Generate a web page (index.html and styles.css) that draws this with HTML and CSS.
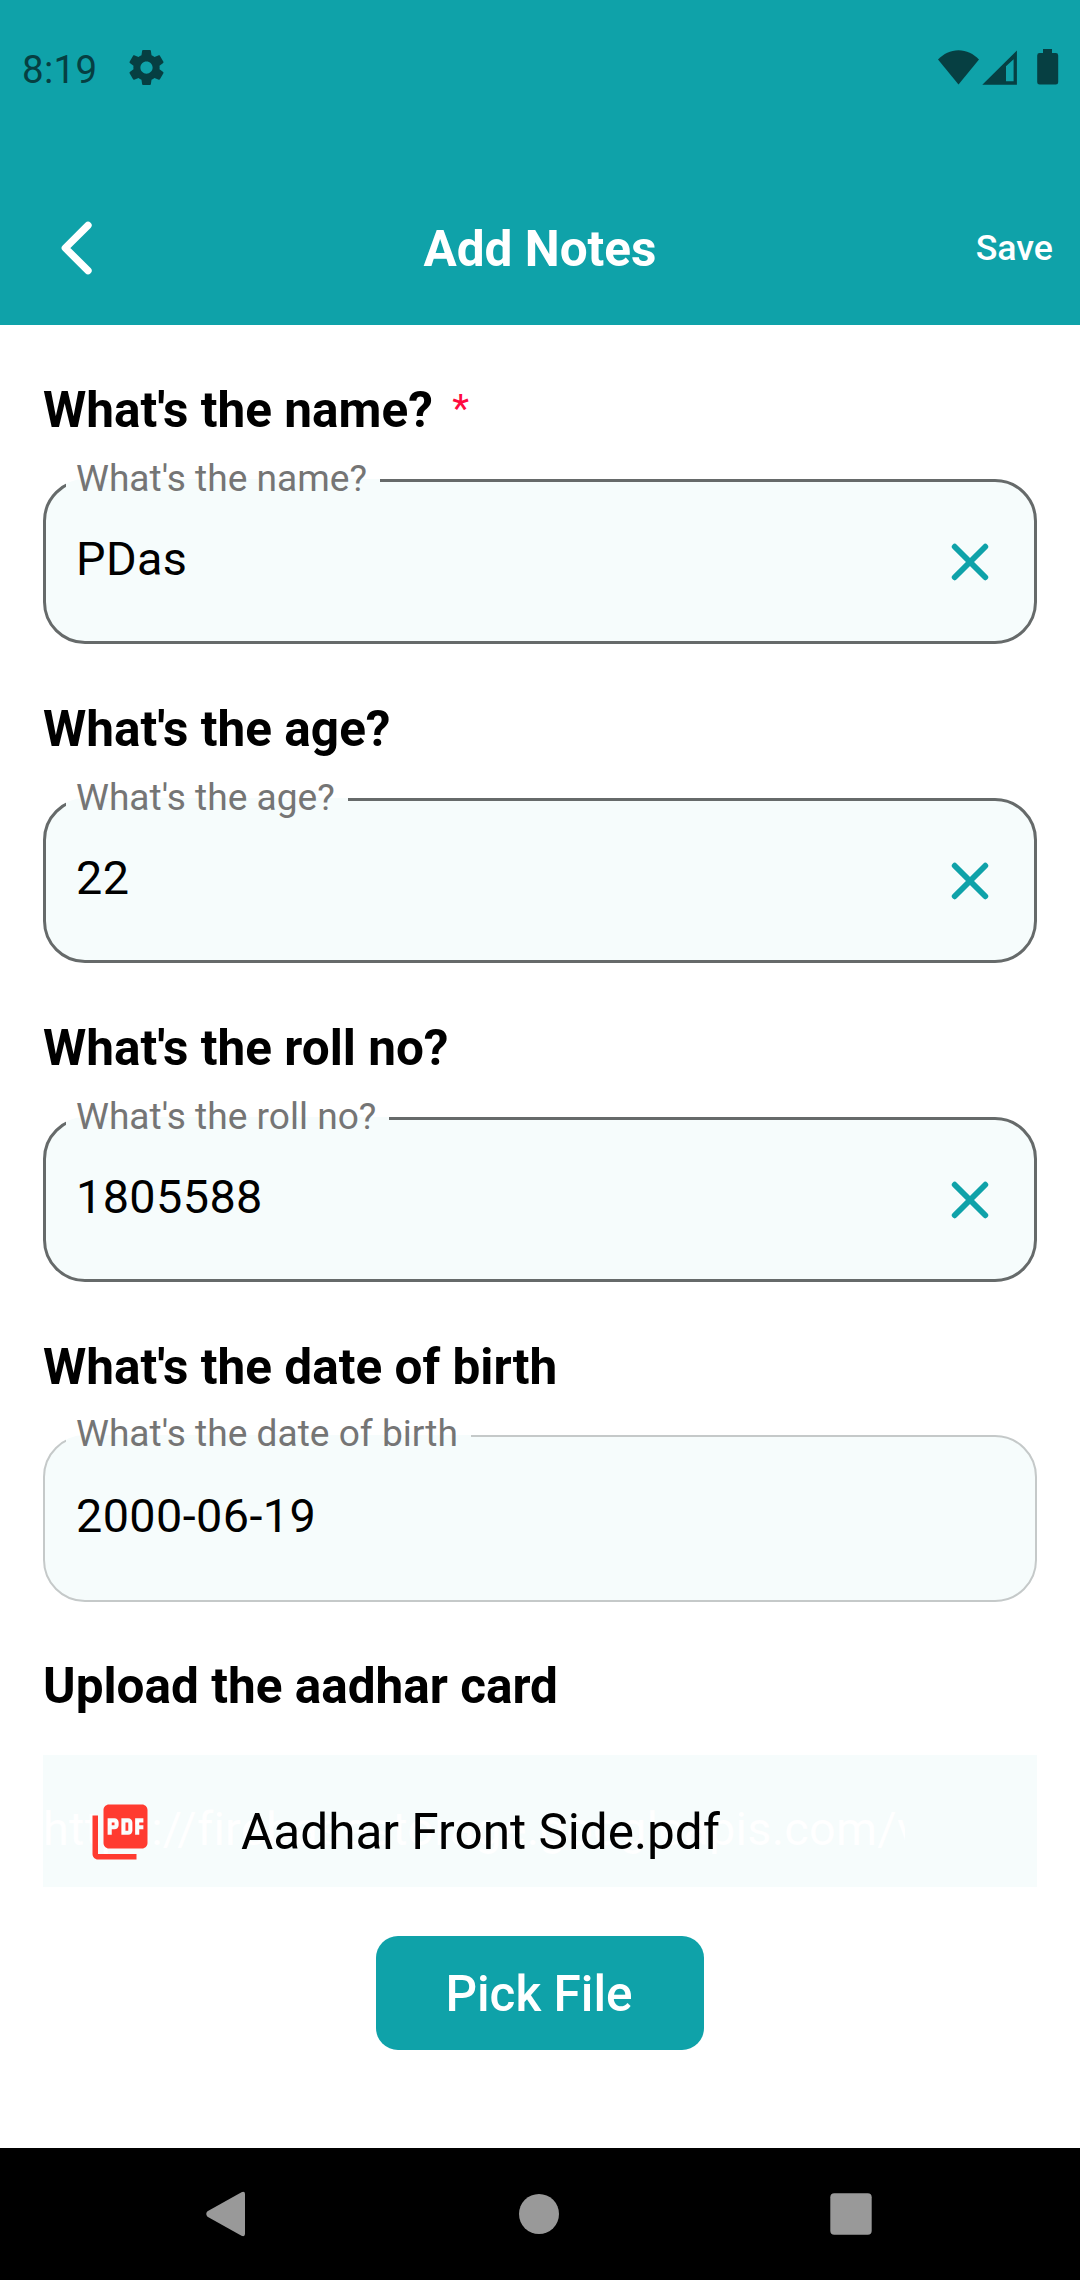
FILE: index.html
```html
<!DOCTYPE html>
<html lang="en">
<head>
<meta charset="utf-8">
<title>Add Notes</title>
<link rel="stylesheet" href="styles.css">
</head>
<body>
<div class="screen">
  <header class="top">
    <div class="status">
      <span class="time">8:19</span>
      <svg class="gear" viewBox="2 2 20 20" width="35" height="35"><path d="M19.43 12.98c.04-.32.07-.64.07-.98s-.03-.66-.07-.98l2.11-1.65c.19-.15.24-.42.12-.64l-2-3.46c-.12-.22-.39-.3-.61-.22l-2.49 1c-.52-.4-1.08-.73-1.69-.98l-.38-2.65C14.46 2.18 14.25 2 14 2h-4c-.25 0-.46.18-.49.42l-.38 2.65c-.61.25-1.17.59-1.69.98l-2.49-1c-.23-.09-.49 0-.61.22l-2 3.46c-.13.22-.07.49.12.64l2.11 1.65c-.04.32-.07.65-.07.98s.03.66.07.98l-2.11 1.65c-.19.15-.24.42-.12.64l2 3.46c.12.22.39.3.61.22l2.49-1c.52.4 1.08.73 1.69.98l.38 2.65c.03.24.24.42.49.42h4c.25 0 .46-.18.49-.42l.38-2.65c.61-.25 1.17-.59 1.69-.98l2.49 1c.23.09.49 0 .61-.22l2-3.46c.12-.22.07-.49-.12-.64l-2.11-1.65zM12 15.5c-1.93 0-3.5-1.57-3.5-3.5s1.57-3.5 3.5-3.5 3.5 1.57 3.5 3.5-1.57 3.5-3.5 3.5z"/></svg>
      <svg class="indicators" viewBox="0 0 122 37" width="122" height="37">
        <path d="M0 10.5C5.500 5 12.500 1.300 20.500 1.300S35.500 5 41 10.500L20.500 35.500Z"/>
        <path fill-rule="evenodd" d="M44.300 35.800 78.900 1.500V35.800ZM68 17.300V32.300H75.600V10.200Z"/>
        <path d="M105 0h9v4h3.800q2.400 0 2.400 2.400v26.800q0 2.400-2.400 2.400h-16.200q-2.400 0-2.400-2.400V6.400q0-2.400 2.400-2.400h3.400z"/>
      </svg>
    </div>
    <div class="appbar">
      <svg class="back" viewBox="0 0 32 54" width="32" height="54"><path d="M28 4.300 5.300 27 28 49.700"/></svg>
      <h1 class="title">Add Notes</h1>
      <span class="save">Save</span>
    </div>
  </header>

  <main class="form">
    <section class="question">
      <h2 class="heading">What's the name? <span class="required">*</span></h2>
      <fieldset class="field">
        <legend class="label">What's the name?</legend>
        <div class="field-body"><span class="value">PDas</span><svg class="clear" viewBox="0 0 38 38" width="38" height="38"><path d="M3.700 3.700 34.300 34.300M34.300 3.700 3.700 34.300"/></svg></div>
      </fieldset>
    </section>
    <section class="question">
      <h2 class="heading">What's the age?</h2>
      <fieldset class="field">
        <legend class="label">What's the age?</legend>
        <div class="field-body"><span class="value">22</span><svg class="clear" viewBox="0 0 38 38" width="38" height="38"><path d="M3.700 3.700 34.300 34.300M34.300 3.700 3.700 34.300"/></svg></div>
      </fieldset>
    </section>
    <section class="question">
      <h2 class="heading">What's the roll no?</h2>
      <fieldset class="field">
        <legend class="label">What's the roll no?</legend>
        <div class="field-body"><span class="value">1805588</span><svg class="clear" viewBox="0 0 38 38" width="38" height="38"><path d="M3.700 3.700 34.300 34.300M34.300 3.700 3.700 34.300"/></svg></div>
      </fieldset>
    </section>
    <section class="question">
      <h2 class="heading">What's the date of birth</h2>
      <fieldset class="field field-date">
        <legend class="label">What's the date of birth</legend>
        <div class="field-body"><span class="value">2000-06-19</span></div>
      </fieldset>
    </section>
    <section class="upload">
      <h2 class="heading">Upload the aadhar card</h2>
      <div class="file">
        <span class="file-url">https://firebasestorage.googleapis.com/v</span>
        <svg class="pdf" viewBox="0 0 24 24" width="66" height="66"><path d="M20 2H8c-1.100 0-2 .9-2 2v12c0 1.100.9 2 2 2h12c1.100 0 2-.9 2-2V4c0-1.100-.9-2-2-2zm-8.500 7.500c0 .83-.67 1.500-1.500 1.500H9v2H7.500V7H10c.83 0 1.500.67 1.500 1.500v1zm5 2c0 .83-.67 1.500-1.500 1.500h-2.500V7H15c.83 0 1.500.67 1.500 1.500v3zm4-3H19v1h1.500V11H19v2h-1.500V7h3v1.500zM9 9.500h1v-1H9v1zM4 6H2v14c0 1.100.9 2 2 2h14v-2H4V6zm10 5.500h1v-3h-1v3z"/></svg>
        <span class="file-name">Aadhar Front Side.pdf</span>
      </div>
      <button class="pick" type="button">Pick File</button>
    </section>
  </main>

  <nav class="navbar">
    <svg viewBox="0 0 40 46" width="40" height="46"><path d="M1.500 20.300 35.500 1.200Q39 0 39 3V43Q39 46 35.500 44.800L1.500 25.700Q-1 23 1.500 20.300Z"/></svg>
    <svg viewBox="0 0 40 40" width="40" height="40"><circle cx="20" cy="20" r="20"/></svg>
    <svg viewBox="0 0 42 42" width="42" height="42"><rect x=".3" y=".3" width="41.400" height="41.400" rx="4"/></svg>
  </nav>
</div>
</body>
</html>
```
FILE: styles.css
```css
* { box-sizing: border-box; }
body { margin: 0; background: #fff; color: #000; font-family: Roboto, "Liberation Sans", sans-serif; }
svg { display: block; flex: none; }
h1, h2 { margin: 0; }

.screen { width: 1080px; height: 2280px; display: flex; flex-direction: column; overflow: hidden; }

.top { height: 325px; background: #0fa2a9; display: flex; flex-direction: column; }
.status { height: 138px; padding: 0 20px 3px 22px; display: flex; align-items: center; color: #063f42; fill: #063f42; }
.time { font-size: 38.5px; line-height: 46px; padding-top: 4px; letter-spacing: .3px; }
.gear { margin-left: 32px; }
.indicators { margin-left: auto; }
.appbar { height: 110px; margin-top: 55px; padding: 0 27px 0 60px; display: grid; grid-template-columns: 1fr auto 1fr; align-items: center; color: #fff; }
.back { fill: none; stroke: #fff; stroke-width: 7.3; stroke-linecap: round; stroke-linejoin: round; }
.title { font-size: 49.5px; font-weight: 700; line-height: 58px; margin-left: -33px; padding-top: 2px; }
.save { justify-self: end; font-size: 35.75px; font-weight: 500; line-height: 42px; }

.form { flex: 1; padding: 56px 43px 0; }
.question { height: 319px; display: flex; flex-direction: column; }
.heading { font-size: 49.5px; font-weight: 700; line-height: 58px; }
.required { margin-left: 7px; vertical-align: 5px; font-size: 39px; font-weight: 400; line-height: 1; color: #ff0a3f; }
.field { height: 188px; min-width: 0; margin: 17px 0 0; padding: 0 45px 0 30px; border: 3px solid #666a6a; border-radius: 42px; background: #f6fcfc; }
.label { margin-left: -10px; padding: 1px 13px 3px 10px; font-size: 37.125px; line-height: 44px; color: #757575; }
.field-body { height: 110px; display: flex; align-items: center; justify-content: space-between; }
.value { font-size: 46.75px; line-height: 56px; letter-spacing: .41px; }
.clear { margin-top: 6px; fill: none; stroke: #0fa2a9; stroke-width: 5.8; stroke-linecap: round; }
.field-date { height: 191px; margin-top: 15px; border-width: 2px; border-color: #c5c9c9; padding-left: 31px; }
.field-date .label { padding-bottom: 4px; }
.field-date .value { padding-top: 2px; }

.upload { display: flex; flex-direction: column; align-items: stretch; }
.file { position: relative; height: 132px; margin-top: 40px; padding: 22px 44px 0; display: flex; align-items: center; background: #f6fcfc; }
.file-url { position: absolute; left: 0; top: 46px; width: 862px; overflow: hidden; white-space: nowrap; font-size: 46.75px; line-height: 56px; letter-spacing: .3px; color: #fff; }
.pdf { position: relative; fill: #ff3b30; }
.file-name { position: relative; margin-left: 88px; font-size: 49.5px; line-height: 58px; }
.pick { align-self: center; width: 328px; height: 114px; margin-top: 49px; padding: 1px 2px 0 0; border: 0; border-radius: 22px; background: #0fa2a9; color: #fff; font: 500 49.5px/58px Roboto, "Liberation Sans", sans-serif; }

.navbar { height: 132px; padding: 0 208px 0 206px; display: flex; align-items: center; justify-content: space-between; background: #000; fill: #999; }
.navbar circle { transform: translateX(1px); }
.navbar svg { overflow: visible; }
```
